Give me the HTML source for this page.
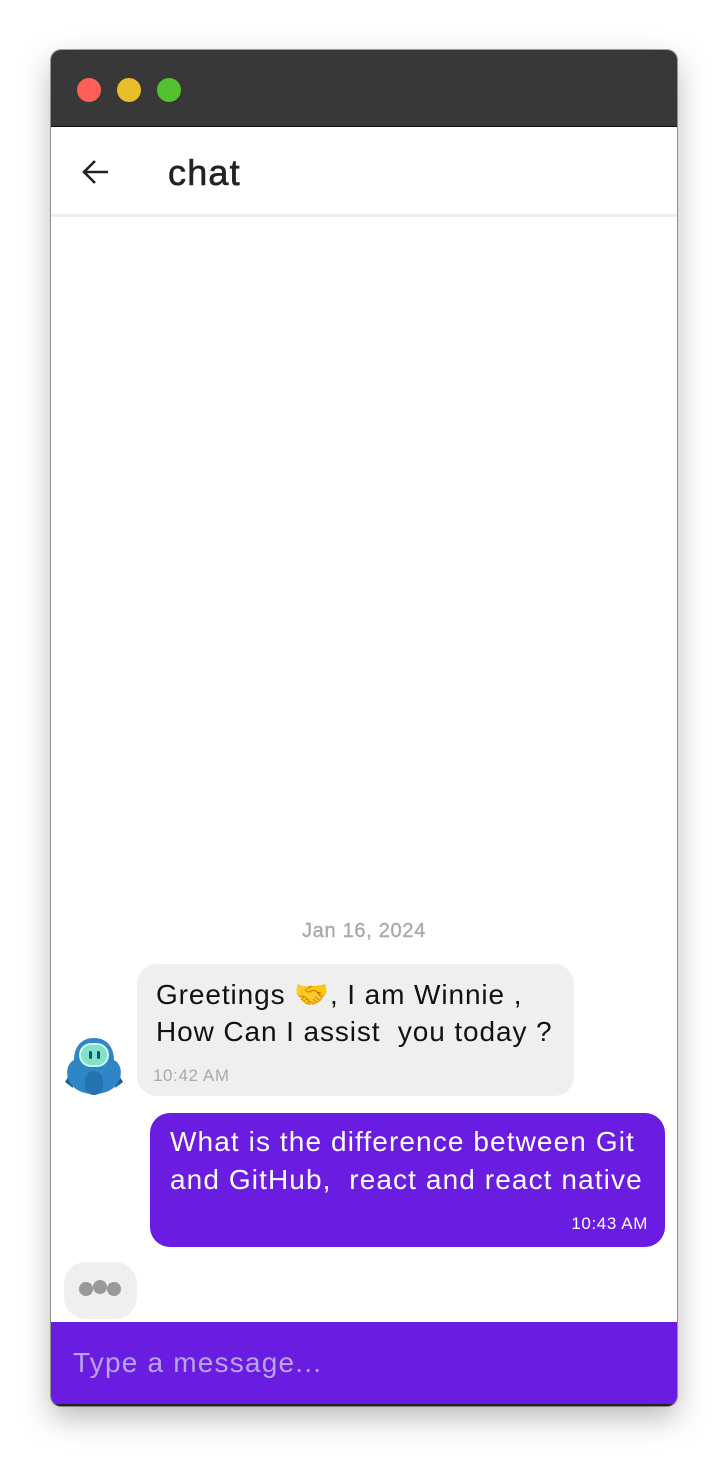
<!DOCTYPE html>
<html><head><meta charset="utf-8"><style>
*{margin:0;padding:0;box-sizing:border-box}
body{width:728px;height:1458px;background:#fff;font-family:"Liberation Sans","Noto Sans CJK SC",sans-serif;position:relative;overflow:hidden}
.win{position:absolute;left:51px;top:50px;width:626px;height:1356px;border-radius:10px;overflow:hidden;box-shadow:0 12px 30px rgba(0,0,0,.28),0 0 0 1px rgba(0,0,0,.35);background:#fff}
.tb{position:absolute;left:0;top:0;width:100%;height:77px;background:#383838;border-bottom:1px solid #111}
.dot{position:absolute;top:28px;width:24px;height:24px;border-radius:50%}
.hd{position:absolute;top:77px;left:0;width:100%;height:90px;background:#fff;border-bottom:3px solid #eee}
.hd .t{position:absolute;left:117px;top:25px;font-size:36px;color:#222;letter-spacing:1.2px;-webkit-text-stroke:0.6px #222}
.date{position:absolute;top:870px;width:100%;text-align:center;font-size:20px;color:#aaa;letter-spacing:0.7px;-webkit-text-stroke:0.4px #aaa}
.b1{position:absolute;left:86px;top:914px;width:437px;height:132px;background:#efefef;border-radius:20px}
.b1 p{position:absolute;left:19px;top:12px;font-size:28px;line-height:37px;color:#111;letter-spacing:0.9px;white-space:nowrap}
.b1 .tm{position:absolute;left:16px;top:102px;font-size:17px;color:#aaa;letter-spacing:0.6px}
.b2{position:absolute;left:99px;top:1063px;width:515px;height:134px;background:#6a1de0;border-radius:20px}
.b2 p{position:absolute;left:20px;top:10px;font-size:28px;line-height:38px;color:#fff;letter-spacing:1.1px;white-space:nowrap}
.b2 .tm{position:absolute;right:17px;top:101px;font-size:17px;color:#fff;letter-spacing:0.6px}
.typ{position:absolute;left:13px;top:1212px;width:73px;height:57px;background:#efefef;border-radius:22px}
.typ span{position:absolute;top:20px;width:14px;height:14px;border-radius:50%;background:#999}
.inp{position:absolute;left:0;top:1272px;width:100%;height:84px;background:#6a1de0;border-bottom:2px solid #222}
.inp span{position:absolute;left:22px;top:25px;font-size:28px;color:#b9a2f0;letter-spacing:1.2px}
</style></head><body>
<div class="win">
 <div class="tb">
  <div class="dot" style="left:26px;background:#fe5f57"></div>
  <div class="dot" style="left:66px;background:#e9be2b"></div>
  <div class="dot" style="left:106px;background:#52c22f"></div>
 </div>
 <div class="hd">
  <svg style="position:absolute;left:30px;top:31px" width="30" height="28" viewBox="0 0 30 28"><path d="M27 14H4M14 3L3 14l11 11" fill="none" stroke="#222" stroke-width="2.6"/></svg>
  <div class="t">chat</div>
 </div>
 <div class="date">Jan 16, 2024</div>
 <svg style="position:absolute;left:14px;top:986px" width="58" height="62" viewBox="0 0 58 62">
  <path d="M6 36l-6 10 8 6z M52 36l6 10-8 6z" fill="#1f5f96"/>
  <path d="M29 2C14 2 9 14 9 24 1 28 0 40 6 48c4 6 12 10 23 10s19-4 23-10c6-8 5-20-3-24 0-10-5-22-20-22z" fill="#2f86c7"/>
  <rect x="15" y="8" width="28" height="22" rx="11" fill="#7fe3c8" stroke="#d4f5ee" stroke-width="2"/>
  <rect x="24" y="15" width="3" height="8" rx="1.5" fill="#1d4e6f"/><rect x="32" y="15" width="3" height="8" rx="1.5" fill="#1d4e6f"/>
  <rect x="20" y="35" width="18" height="24" rx="9" fill="#2572b0"/>
 </svg>
 <div class="b1"><p>Greetings <span style="color:#f2b630">🤝</span>, I am Winnie ,<br>How Can I assist &nbsp;you today ?</p><div class="tm">10:42 AM</div></div>
 <div class="b2"><p>What is the difference between Git<br>and GitHub, &nbsp;react and react native</p><div class="tm">10:43 AM</div></div>
 <div class="typ"><span style="left:15px"></span><span style="left:29px;top:18px"></span><span style="left:43px"></span></div>
 <div class="inp"><span>Type a message...</span></div>
</div>
</body></html>
